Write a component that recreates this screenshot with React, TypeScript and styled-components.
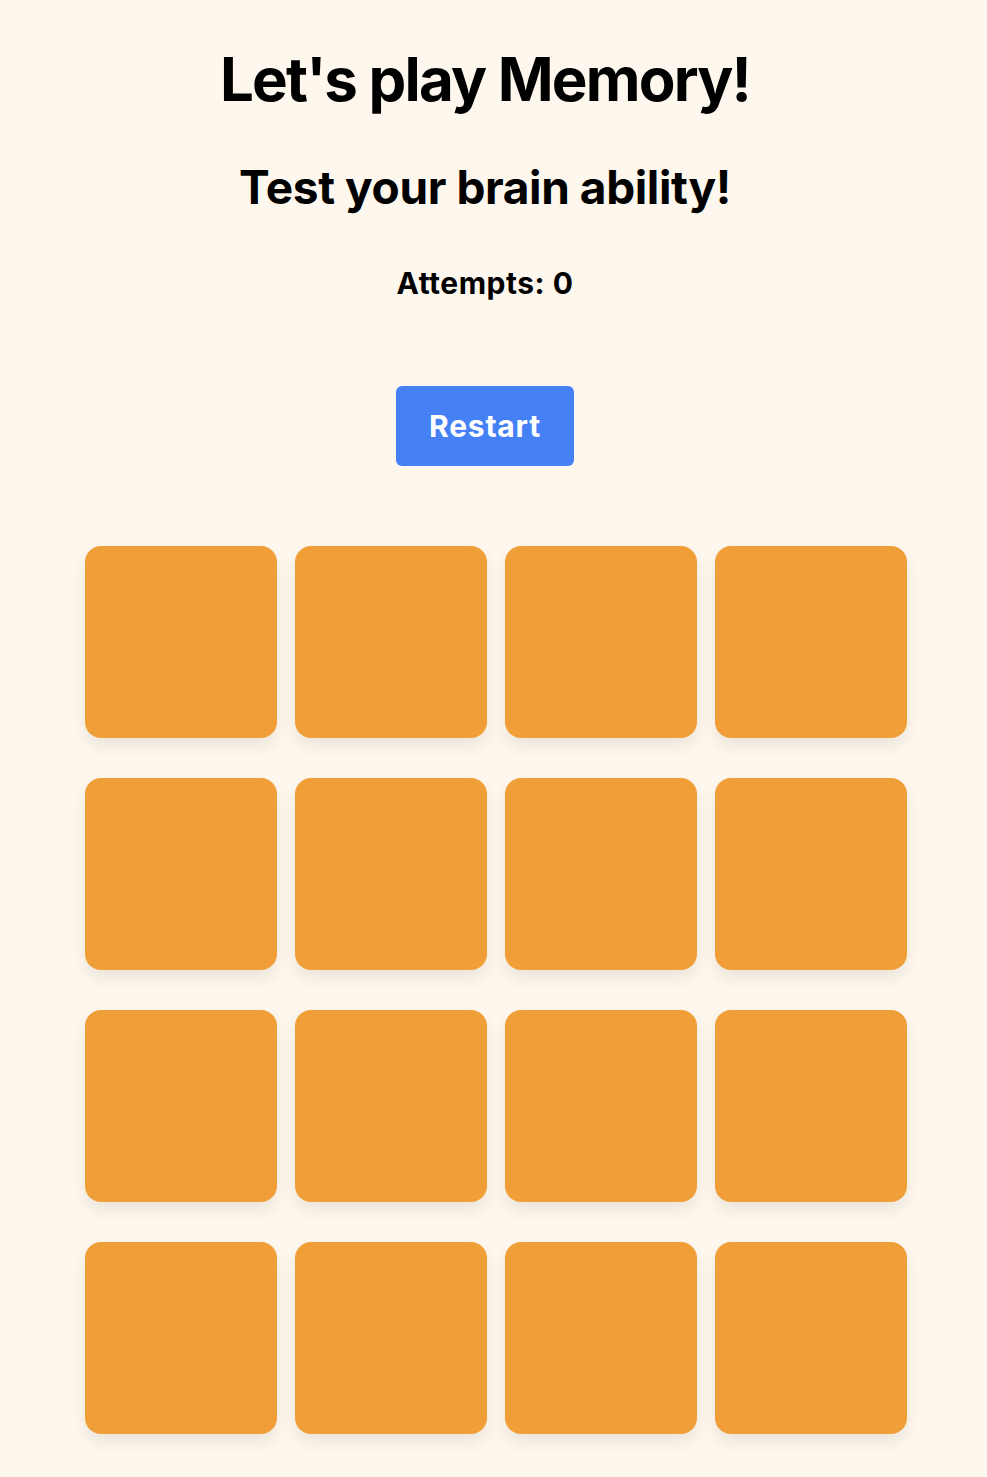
import styled, { createGlobalStyle } from 'styled-components'

const GlobalStyle = createGlobalStyle`
  html, body {
    margin: 0;
    padding: 0;
    background: #fdf7ee;
  }
  body {
    font-family: Inter, "Noto Sans", sans-serif;
    color: #000000;
  }
`

const Page = styled.main`
  display: flex;
  flex-direction: column;
  align-items: center;
  padding: 43px 17px 44px 0;
  text-align: center;
`

const Title = styled.h1`
  font-size: 60px;
  line-height: 72px;
  font-weight: 700;
  letter-spacing: -1.8px;
  margin: 0;
`

const Subtitle = styled.h2`
  font-size: 46px;
  line-height: 55px;
  font-weight: 700;
  letter-spacing: -0.4px;
  margin: 45px 0 0;
`

const Attempts = styled.p`
  font-size: 30px;
  line-height: 36px;
  font-weight: 700;
  letter-spacing: 0.5px;
  margin: 50px 0 0;
`

const RestartButton = styled.button`
  margin-top: 85px;
  height: 80px;
  padding: 0 33px;
  background: #4680f5;
  color: #ffffff;
  border: none;
  border-radius: 6px;
  font-family: inherit;
  font-size: 30px;
  font-weight: 700;
  letter-spacing: 0.8px;
  cursor: pointer;
`

const BoardWrap = styled.div`
  align-self: stretch;
  display: flex;
  justify-content: center;
  padding-left: 22px;
  margin-top: 80px;
`

const Board = styled.div`
  display: grid;
  grid-template-columns: repeat(4, 192px);
  column-gap: 18px;
  row-gap: 40px;
`

const Card = styled.div<{ $flipped?: boolean }>`
  width: 192px;
  height: 192px;
  border-radius: 16px;
  background: ${(p) => (p.$flipped ? '#ffffff' : '#f09f38')};
  box-shadow: 0 8px 16px rgba(0, 0, 0, 0.08);
`

export default function App() {
  const cards = Array.from({ length: 16 }, (_, i) => i)
  return (
    <>
      <GlobalStyle />
      <Page>
        <Title>Let's play Memory!</Title>
        <Subtitle>Test your brain ability!</Subtitle>
        <Attempts>Attempts: 0</Attempts>
        <RestartButton type="button">Restart</RestartButton>
        <BoardWrap>
          <Board>
            {cards.map((id) => (
              <Card key={id} />
            ))}
          </Board>
        </BoardWrap>
      </Page>
    </>
  )
}
